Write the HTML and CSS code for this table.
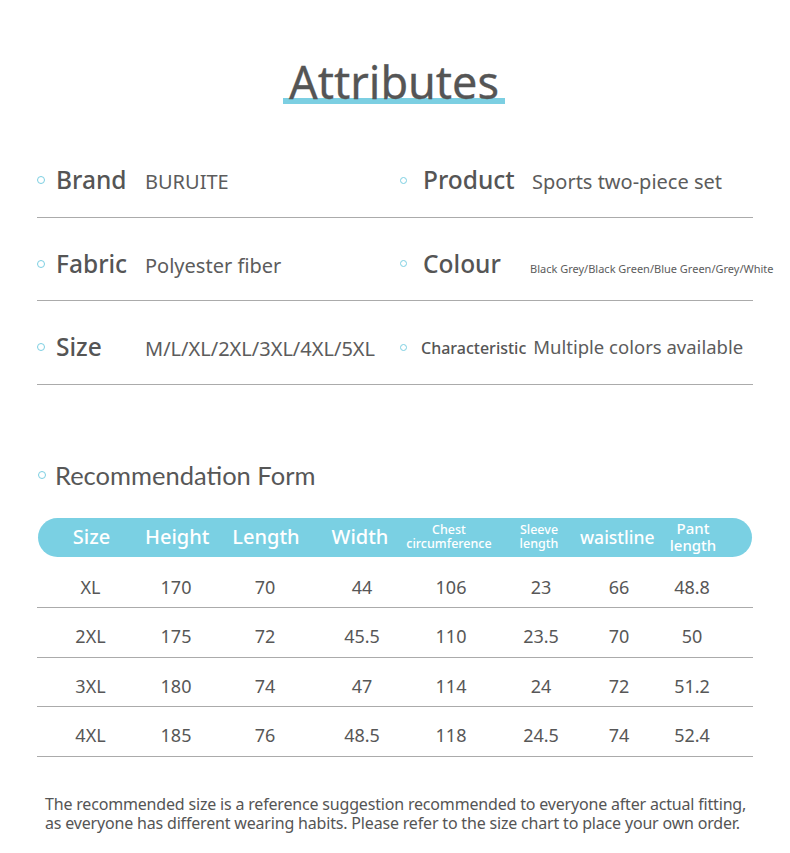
FILE: index.html
```html
<!DOCTYPE html>
<html lang="en">
<head>
<meta charset="utf-8">
<title>Attributes</title>
<link rel="stylesheet" href="styles.css">
</head>
<body>
<div class="page">
  <h1 class="title"><span class="title-text">Attributes</span></h1>

  <div class="attrs">
    <div class="attr-row">
      <div class="attr attr-left"><i class="dot"></i><span class="label">Brand</span><span class="value">BURUITE</span></div>
      <div class="attr attr-right"><i class="dot dot-sm"></i><span class="label">Product</span><span class="value">Sports two-piece set</span></div>
    </div>
    <div class="attr-row">
      <div class="attr attr-left"><i class="dot"></i><span class="label">Fabric</span><span class="value">Polyester fiber</span></div>
      <div class="attr attr-right"><i class="dot dot-sm"></i><span class="label">Colour</span><span class="value value-xs">Black Grey/Black Green/Blue Green/Grey/White</span></div>
    </div>
    <div class="attr-row">
      <div class="attr attr-left"><i class="dot"></i><span class="label">Size</span><span class="value">M/L/XL/2XL/3XL/4XL/5XL</span></div>
      <div class="attr attr-right"><i class="dot dot-sm"></i><span class="label label-sm">Characteristic</span><span class="value value-sm">Multiple colors available</span></div>
    </div>
  </div>

  <h2 class="section-title"><i class="dot"></i>Recommendation Form</h2>

  <div class="size-table">
    <div class="thead">
      <div class="th">Size</div>
      <div class="th">Height</div>
      <div class="th">Length</div>
      <div class="th">Width</div>
      <div class="th th-xs">Chest<br>circumference</div>
      <div class="th th-xs">Sleeve<br>length</div>
      <div class="th th-md">waistline</div>
      <div class="th th-sm">Pant<br>length</div>
    </div>
    <div class="tr"><div>XL</div><div>170</div><div>70</div><div>44</div><div>106</div><div>23</div><div>66</div><div>48.8</div></div>
    <div class="tr"><div>2XL</div><div>175</div><div>72</div><div>45.5</div><div>110</div><div>23.5</div><div>70</div><div>50</div></div>
    <div class="tr"><div>3XL</div><div>180</div><div>74</div><div>47</div><div>114</div><div>24</div><div>72</div><div>51.2</div></div>
    <div class="tr"><div>4XL</div><div>185</div><div>76</div><div>48.5</div><div>118</div><div>24.5</div><div>74</div><div>52.4</div></div>
  </div>

  <p class="note">The recommended size is a reference suggestion recommended to everyone after actual fitting,<br>as everyone has different wearing habits. Please refer to the size chart to place your own order.</p>
</div>
</body>
</html>
```

FILE: styles.css
```css
* { box-sizing: border-box; }

html, body {
  margin: 0;
  padding: 0;
  background: #ffffff;
}

body {
  font-family: "Noto Sans", "Open Sans", sans-serif;
  color: #555555;
}

.page {
  width: 716px;
  margin-left: 37px;
  padding-top: 57px;
}

/* Title */
.title {
  margin: 0 0 0 -2px;
  text-align: center;
  font-weight: 400;
  font-size: 45px;
  line-height: 50px;
  color: #555555;
  -webkit-text-stroke: 0.3px #555555;
}

.title-text {
  display: inline-block;
  padding: 0 6px;
  background: linear-gradient(#7ccfe2, #7ccfe2) 0 calc(100% - 3px) / 100% 6px no-repeat;
}

/* Attributes */
.attrs {
  margin-top: 27px;
}

.attr-row {
  display: grid;
  grid-template-columns: 363px 1fr;
  height: 83.5px;
  padding-top: 28px;
  border-bottom: 1px solid #ababab;
}

.attr {
  display: flex;
  align-items: baseline;
  height: 36px;
  line-height: 36px;
  white-space: nowrap;
}

.dot {
  display: inline-block;
  flex: none;
  width: 8px;
  height: 8px;
  border: 1px solid #7ccfe2;
  border-radius: 50%;
  align-self: center;
}

.dot-sm {
  width: 7px;
  height: 7px;
}

.attr-left .dot { margin-right: 11px; }
.attr-right .dot { margin-right: 16px; }

.label {
  font-size: 24.5px;
  font-weight: 500;
  color: #555;
}

.attr-left .label { width: 89px; flex: none; }
.attr-right .label { width: 109px; flex: none; }

.attr-right .label-sm {
  width: auto;
  font-size: 16px;
  font-weight: 500;
  margin-left: -2px;
  margin-right: 7px;
}

.value {
  font-size: 20px;
  color: #5c5c5c;
}

.value-sm {
  font-size: 18.5px;
}

.value-xs {
  font-size: 11px;
  margin-left: -2px;
}

/* Recommendation form */
.section-title {
  display: flex;
  align-items: center;
  margin: 75px 0 0 0;
  font-family: "Lato", "Noto Sans", sans-serif;
  font-weight: 400;
  font-size: 25.5px;
  line-height: 30px;
  color: #575757;
}

.section-title .dot {
  margin-left: 1px;
  margin-right: 9px;
}

.size-table {
  margin-top: 28px;
}

.thead,
.tr {
  display: grid;
  grid-template-columns: 107px 64px 114px 80px 98px 82px 74px 72px 1fr;
}

.thead {
  height: 39px;
  margin: 0 1px 2px 1px;
  background: #7ad0e3;
  border-radius: 20px;
  color: #ffffff;
  align-items: center;
}

.th {
  text-align: center;
  font-size: 20px;
  font-weight: 500;
  line-height: 24px;
}

.thead .th:nth-child(4),
.thead .th:nth-child(5),
.thead .th:nth-child(6),
.thead .th:nth-child(7) {
  position: relative;
  left: -3px;
}

.th-xs {
  font-size: 12.5px;
  line-height: 14px;
  font-weight: 500;
}

.th-sm {
  font-size: 15px;
  line-height: 17px;
}

.th-md {
  font-size: 17.5px;
}

.tr {
  height: 49.5px;
  padding-top: 8px;
  line-height: 40.5px;
  border-bottom: 1px solid #ababab;
  font-size: 18px;
  color: #575757;
}

.tr > div {
  text-align: center;
}

.note {
  margin: 38px 0 0 8px;
  font-size: 16px;
  line-height: 19.5px;
  letter-spacing: -0.18px;
  color: #555;
  white-space: nowrap;
}
```
